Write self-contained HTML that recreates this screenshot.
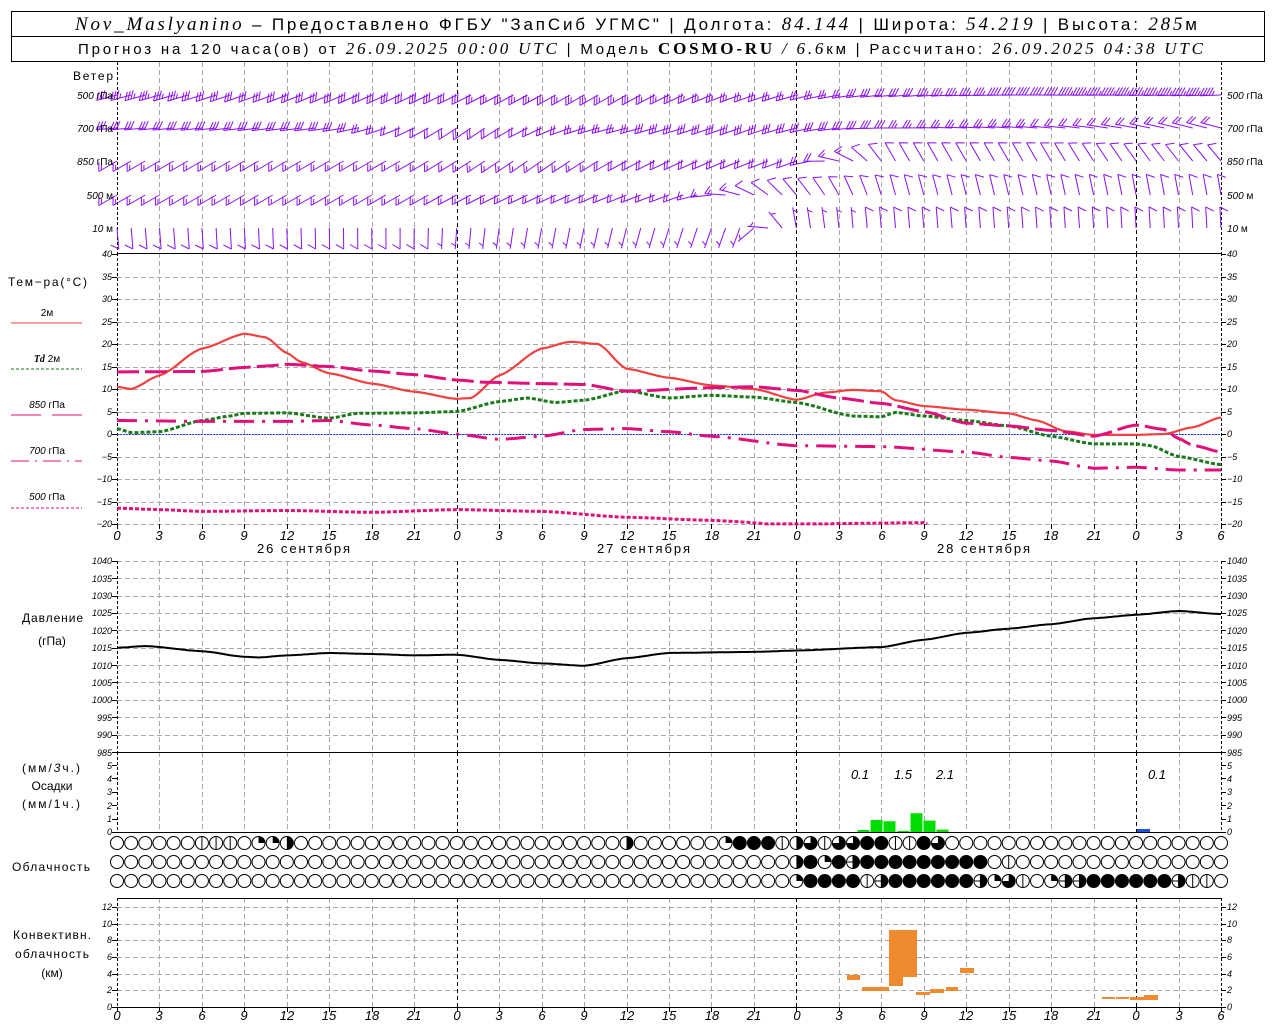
<!DOCTYPE html>
<html><head><meta charset="utf-8">
<style>
html,body{margin:0;padding:0;background:#fff;}
svg{display:block;}
text{font-family:"Liberation Sans",sans-serif;fill:#000;}
.ax{font-size:9px;font-style:italic;}
.tk{font-size:13px;font-style:italic;}
.ser{font-family:"Liberation Serif",serif;font-style:italic;}
</style></head>
<body>
<svg id="s" width="1280" height="1024" viewBox="0 0 1280 1024" xmlns="http://www.w3.org/2000/svg">
<rect x="0" y="0" width="1280" height="1024" fill="#fff"/>
<g id="grid"></g>
<g id="plot"></g>
<!-- header -->
<rect x="11.5" y="11.5" width="1253" height="50" fill="none" stroke="#000"/>
<line x1="11.5" y1="36.5" x2="1264.5" y2="36.5" stroke="#000"/>
<text x="75" y="30" font-size="17" textLength="1122" lengthAdjust="spacing"><tspan class="ser" font-size="19">Nov_Maslyanino</tspan> – Предоставлено ФГБУ "ЗапСиб УГМС" | Долгота: <tspan class="ser" font-size="19">84.144</tspan> | Широта: <tspan class="ser" font-size="19">54.219</tspan> | Высота: <tspan class="ser" font-size="19">285</tspan>м</text>
<text x="78" y="54" font-size="15" textLength="1125" lengthAdjust="spacing">Прогноз на 120 часа(ов) от <tspan class="ser" font-size="17">26.09.2025 00:00 UTC</tspan>  | Модель <tspan font-family="Liberation Serif" font-weight="bold" font-size="17">COSMO-RU</tspan> <tspan class="ser" font-size="17">/ 6.6</tspan>км | Рассчитано: <tspan class="ser" font-size="17">26.09.2025 04:38 UTC</tspan></text>
<!-- wind labels -->
<text x="113" y="80" text-anchor="end" font-size="12" textLength="40" lengthAdjust="spacing">Ветер</text>
<g font-size="10">
<text x="113" y="99" text-anchor="end"><tspan font-style="italic">500</tspan> гПа</text>
<text x="113" y="132" text-anchor="end"><tspan font-style="italic">700</tspan> гПа</text>
<text x="113" y="165" text-anchor="end"><tspan font-style="italic">850</tspan> гПа</text>
<text x="113" y="199" text-anchor="end"><tspan font-style="italic">500</tspan> м</text>
<text x="113" y="232" text-anchor="end"><tspan font-style="italic">10</tspan>   м</text>
<text x="1227" y="99"><tspan font-style="italic">500</tspan> гПа</text>
<text x="1227" y="132"><tspan font-style="italic">700</tspan> гПа</text>
<text x="1227" y="165"><tspan font-style="italic">850</tspan> гПа</text>
<text x="1227" y="199"><tspan font-style="italic">500</tspan> м</text>
<text x="1227" y="232"><tspan font-style="italic">10</tspan>   м</text>
</g>
<!-- temp legend -->
<text x="8" y="286" font-size="12" textLength="79" lengthAdjust="spacing">Тем−ра(°С)</text>
<text x="47" y="316" text-anchor="middle" font-size="10">2м</text>
<line x1="11" y1="323" x2="82" y2="323" stroke="#f04040"/>
<text x="47" y="362" text-anchor="middle" font-size="10"><tspan font-weight="bold" font-style="italic" font-family="Liberation Serif">Td</tspan>  2м</text>
<line x1="11" y1="369" x2="82" y2="369" stroke="#1a7a1a" stroke-dasharray="3,2"/>
<text x="47" y="408" text-anchor="middle" font-size="10"><tspan font-style="italic">850</tspan>  гПа</text>
<line x1="11" y1="415" x2="41" y2="415" stroke="#e0107a"/><line x1="52" y1="415" x2="82" y2="415" stroke="#e0107a"/>
<text x="47" y="454" text-anchor="middle" font-size="10"><tspan font-style="italic">700</tspan> гПа</text>
<line x1="11" y1="461" x2="82" y2="461" stroke="#e0107a" stroke-dasharray="18,6,2,6"/>
<text x="47" y="500" text-anchor="middle" font-size="10"><tspan font-style="italic">500</tspan> гПа</text>
<line x1="11" y1="508" x2="82" y2="508" stroke="#e0107a" stroke-dasharray="3,2"/>
<!-- dates -->
<text x="257" y="553" font-size="13" textLength="93" lengthAdjust="spacing">26 сентября</text>
<text x="597" y="553" font-size="13" textLength="93" lengthAdjust="spacing">27 сентября</text>
<text x="937" y="553" font-size="13" textLength="93" lengthAdjust="spacing">28 сентября</text>
<!-- left legends -->
<text x="22" y="622" font-size="12" textLength="61" lengthAdjust="spacing">Давление</text>
<text x="52" y="645" text-anchor="middle" font-size="12">(гПа)</text>
<text x="22" y="772" font-size="12" textLength="58" lengthAdjust="spacing">(мм/<tspan font-style="italic">3</tspan>ч.)</text>
<text x="52" y="790" text-anchor="middle" font-size="12">Осадки</text>
<text x="22" y="808" font-size="12" textLength="58" lengthAdjust="spacing">(мм/1ч.)</text>
<text x="12" y="871" font-size="12" textLength="78" lengthAdjust="spacing">Облачность</text>
<text x="13" y="939" font-size="12" textLength="78" lengthAdjust="spacing">Конвективн.</text>
<text x="15" y="958" font-size="12" textLength="74" lengthAdjust="spacing">облачность</text>
<text x="52" y="977" text-anchor="middle" font-size="12">(км)</text>
<g font-size="13" font-style="italic">
<text x="860" y="779" text-anchor="middle">0.1</text>
<text x="903" y="779" text-anchor="middle">1.5</text>
<text x="945" y="779" text-anchor="middle">2.1</text>
<text x="1157" y="779" text-anchor="middle">0.1</text>
</g>
<g class="ax">
<text x="112" y="257" text-anchor="end">40</text><text x="1227" y="257">40</text>
<text x="112" y="280" text-anchor="end">35</text><text x="1227" y="280">35</text>
<text x="112" y="302" text-anchor="end">30</text><text x="1227" y="302">30</text>
<text x="112" y="325" text-anchor="end">25</text><text x="1227" y="325">25</text>
<text x="112" y="347" text-anchor="end">20</text><text x="1227" y="347">20</text>
<text x="112" y="370" text-anchor="end">15</text><text x="1227" y="370">15</text>
<text x="112" y="392" text-anchor="end">10</text><text x="1227" y="392">10</text>
<text x="112" y="415" text-anchor="end">5</text><text x="1227" y="415">5</text>
<text x="112" y="437" text-anchor="end">0</text><text x="1227" y="437">0</text>
<text x="112" y="460" text-anchor="end">−5</text><text x="1227" y="460">−5</text>
<text x="112" y="482" text-anchor="end">−10</text><text x="1227" y="482">−10</text>
<text x="112" y="505" text-anchor="end">−15</text><text x="1227" y="505">−15</text>
<text x="112" y="527" text-anchor="end">−20</text><text x="1227" y="527">−20</text>
<text x="112" y="564" text-anchor="end">1040</text><text x="1227" y="564">1040</text>
<text x="112" y="582" text-anchor="end">1035</text><text x="1227" y="582">1035</text>
<text x="112" y="599" text-anchor="end">1030</text><text x="1227" y="599">1030</text>
<text x="112" y="616" text-anchor="end">1025</text><text x="1227" y="616">1025</text>
<text x="112" y="634" text-anchor="end">1020</text><text x="1227" y="634">1020</text>
<text x="112" y="651" text-anchor="end">1015</text><text x="1227" y="651">1015</text>
<text x="112" y="669" text-anchor="end">1010</text><text x="1227" y="669">1010</text>
<text x="112" y="686" text-anchor="end">1005</text><text x="1227" y="686">1005</text>
<text x="112" y="703" text-anchor="end">1000</text><text x="1227" y="703">1000</text>
<text x="112" y="721" text-anchor="end">995</text><text x="1227" y="721">995</text>
<text x="112" y="738" text-anchor="end">990</text><text x="1227" y="738">990</text>
<text x="112" y="756" text-anchor="end">985</text><text x="1227" y="756">985</text>
<text x="112" y="769" text-anchor="end">5</text><text x="1227" y="769">5</text>
<text x="112" y="782" text-anchor="end">4</text><text x="1227" y="782">4</text>
<text x="112" y="795" text-anchor="end">3</text><text x="1227" y="795">3</text>
<text x="112" y="809" text-anchor="end">2</text><text x="1227" y="809">2</text>
<text x="112" y="822" text-anchor="end">1</text><text x="1227" y="822">1</text>
<text x="112" y="835" text-anchor="end">0</text><text x="1227" y="835">0</text>
<text x="112" y="910" text-anchor="end">12</text><text x="1227" y="910">12</text>
<text x="112" y="927" text-anchor="end">10</text><text x="1227" y="927">10</text>
<text x="112" y="943" text-anchor="end">8</text><text x="1227" y="943">8</text>
<text x="112" y="960" text-anchor="end">6</text><text x="1227" y="960">6</text>
<text x="112" y="977" text-anchor="end">4</text><text x="1227" y="977">4</text>
<text x="112" y="993" text-anchor="end">2</text><text x="1227" y="993">2</text>
<text x="112" y="1010" text-anchor="end">0</text><text x="1227" y="1010">0</text>
</g>
<g class="tk" text-anchor="middle">
<text x="117" y="540">0</text><text x="159" y="540">3</text><text x="202" y="540">6</text><text x="244" y="540">9</text><text x="287" y="540">12</text><text x="329" y="540">15</text><text x="372" y="540">18</text><text x="414" y="540">21</text><text x="457" y="540">0</text><text x="499" y="540">3</text><text x="542" y="540">6</text><text x="584" y="540">9</text><text x="627" y="540">12</text><text x="669" y="540">15</text><text x="712" y="540">18</text><text x="754" y="540">21</text><text x="797" y="540">0</text><text x="839" y="540">3</text><text x="882" y="540">6</text><text x="924" y="540">9</text><text x="966" y="540">12</text><text x="1009" y="540">15</text><text x="1051" y="540">18</text><text x="1094" y="540">21</text><text x="1136" y="540">0</text><text x="1179" y="540">3</text><text x="1221" y="540">6</text>
<text x="117" y="1020">0</text><text x="159" y="1020">3</text><text x="202" y="1020">6</text><text x="244" y="1020">9</text><text x="287" y="1020">12</text><text x="329" y="1020">15</text><text x="372" y="1020">18</text><text x="414" y="1020">21</text><text x="457" y="1020">0</text><text x="499" y="1020">3</text><text x="542" y="1020">6</text><text x="584" y="1020">9</text><text x="627" y="1020">12</text><text x="669" y="1020">15</text><text x="712" y="1020">18</text><text x="754" y="1020">21</text><text x="797" y="1020">0</text><text x="839" y="1020">3</text><text x="882" y="1020">6</text><text x="924" y="1020">9</text><text x="966" y="1020">12</text><text x="1009" y="1020">15</text><text x="1051" y="1020">18</text><text x="1094" y="1020">21</text><text x="1136" y="1020">0</text><text x="1179" y="1020">3</text><text x="1221" y="1020">6</text>
</g>
</svg>
<script>
(function(){
var NS="http://www.w3.org/2000/svg";
var G=document.getElementById("grid"),P=document.getElementById("plot");
function el(par,t,a){var e=document.createElementNS(NS,t);for(var k in a)e.setAttribute(k,a[k]);par.appendChild(e);return e;}
function X(h){return 117+h*14.154;}
function line(par,x1,y1,x2,y2,st,w,da){var a={x1:x1,y1:y1,x2:x2,y2:y2,stroke:st,"stroke-width":w||1};if(da)a["stroke-dasharray"]=da;return el(par,"line",a);}
var GR="#a8a8a8";
function hg(y){line(G,117,y+.5,1221,y+.5,GR,1,"5,3");}
for(var t=35;t>=-20;t-=5){hg(Math.round(434-t*4.5));}
for(var p=1040;p>985;p-=5){hg(Math.round(561+(1040-p)*3.47));}
for(var k=2;k<=12;k+=2){hg(Math.round(1007-k*8.33));}
var secs=[[62,253],[253,524],[561,752],[752,832],[898,1007]];
for(var h=3;h<78;h+=3){var x=Math.round(X(h))+.5;var day=(h%24==0);
 secs.forEach(function(s){line(G,x,s[0],x,s[1],day?"#000":GR,1,day?"4,3":"5,3");});}
secs.forEach(function(s){line(G,117.5,s[0],117.5,s[1],"#000",1,"3,2");line(G,1221.5,s[0],1221.5,s[1],"#000",1,"3,2");});
function tk(y){line(G,112,y+.5,117,y+.5,"#000");line(G,1221,y+.5,1226,y+.5,"#000");}
for(var t=40;t>=-20;t-=5)tk(Math.round(434-t*4.5));
for(var p=1040;p>=985;p-=5)tk(Math.round(561+(1040-p)*3.47));
for(var i=0;i<=5;i++)tk(Math.round(832-i*13.4));
for(var k=0;k<=12;k+=2)tk(Math.round(1007-k*8.33));
for(var h=0;h<=78;h+=3){var x=Math.round(X(h))+.5;line(G,x,524,x,529,"#000");line(G,x,1007,x,1012,"#000");}
[253,752,832,898,1007].forEach(function(y){line(G,117,y+.5,1221,y+.5,"#000");});
line(G,117,434.5,1221,434.5,"#2040ff",1,"2,1");
function interp(pts,h){for(var i=0;i<pts.length-1;i++){if(h>=pts[i][0]&&h<=pts[i+1][0]){var a=pts[i],b=pts[i+1];var f=(h-a[0])/(b[0]-a[0]);f=(1-Math.cos(f*Math.PI))/2*0.5+f*0.5;return a[1]+(b[1]-a[1])*f;}}return pts[pts.length-1][1];}
function curve(pts,fy,st,w,da,clipY){var d="";for(var h=0;h<=78;h+=0.25){var y=fy(interp(pts,h));if(clipY&&y>clipY){continue;}d+=(d?"L":"M")+X(h).toFixed(1)+","+y.toFixed(1);}var a={d:d,fill:"none",stroke:st,"stroke-width":w};if(da)a["stroke-dasharray"]=da;el(P,"path",a);}
var TY=function(t){return 434-t*4.5;};
curve([[0,10.5],[1,10],[3,13],[6,19],[9,22.3],[10.5,21.5],[12,18],[13,16],[15,13.5],[18,11.2],[21,9.4],[24,7.8],[25,8],[27,13],[30,19],[32,20.5],[34,20],[36,14.5],[39,12.5],[42,10.8],[45,10],[48,7.6],[50,9.2],[52,9.8],[54,9.5],[55,7.5],[57,6.2],[60,5.4],[63,4.6],[65,3],[67,0.6],[69,-0.2],[72,-0.2],[74,0],[76,1.5],[78,3.7]],TY,"#f04040",2.2);
curve([[0,1.2],[1,0.3],[3,0.5],[6,3],[8,4],[9,4.6],[12,4.7],[15,3.5],[17,4.6],[21,4.7],[24,5],[27,7.2],[29,8],[31,7],[33,7.5],[36,9.6],[39,8],[42,8.6],[45,8.2],[48,7],[52,4],[54,3.8],[55,4.8],[57,4],[60,3],[63,1.8],[66,-0.5],[69,-2.2],[72,-2.2],[73,-2.6],[75,-5],[78,-6.8]],TY,"#1a7a1a",3,"4,2");
curve([[0,13.8],[6,13.9],[9,14.8],[11,15.2],[12,15.5],[15,15],[18,14],[21,13.2],[24,12],[26,11.5],[30,11.2],[33,11],[36,9.5],[42,10.3],[45,10.5],[48,9.7],[51,8],[54,6.8],[57,5],[60,2.4],[63,1.8],[66,0.8],[69,-0.5],[72,2],[74,1],[75,-1],[76,-2.5],[78,-4]],TY,"#e0107a",3,"22,6");
curve([[0,3],[6,2.8],[12,2.8],[15,3],[18,2],[21,1.2],[24,0],[27,-1.2],[30,-0.5],[33,1],[36,1.2],[39,0.5],[42,-0.5],[48,-2.6],[54,-2.8],[60,-4],[63,-5.2],[66,-6],[69,-7.6],[72,-7.4],[75,-8],[78,-8]],TY,"#e0107a",3,"20,8,3,8");
curve([[0,-16.5],[3,-16.8],[6,-17.2],[12,-17],[18,-17.4],[24,-16.8],[30,-17.2],[36,-18.5],[42,-19.2],[48,-20.3],[51,-19.9],[57,-19.7],[58,-21],[78,-24]],TY,"#e0107a",3,"4,2",524);
curve([[0,1015],[2,1015.5],[6,1014],[9,1012.4],[10,1012.2],[12,1012.8],[15,1013.5],[18,1013.2],[21,1012.8],[24,1013],[27,1011.5],[30,1010.5],[33,1009.8],[36,1012],[39,1013.5],[45,1013.8],[48,1014.2],[54,1015.2],[57,1017.3],[60,1019.3],[63,1020.5],[66,1021.8],[69,1023.5],[72,1024.5],[75,1025.6],[78,1024.7]],function(p){return 561+(1040-p)*3.47;},"#000",2);
[[857,0.15],[870,0.9],[883,0.8],[897,0.08],[910,1.4],[923,0.85],[936,0.18]].forEach(function(b){var hgt=b[1]*13.4;el(P,"rect",{x:b[0]+0.5,y:832-hgt,width:12,height:hgt,fill:"#00dd00"});});
el(P,"rect",{x:1137,y:829,width:13,height:3,fill:"#2050e0"});
[[847,975,13,5],[862,987,13,4],[875,987,14,4],[889,930,14,56],[903,930,14,47],[916,992,14,3],[930,989,14,4],[946,987,12,4],[960,968,14,5],[1102,997,13,2],[1116,997,13,2],[1130,997,14,3],[1144,995,14,5]].forEach(function(r){el(P,"rect",{x:r[0],y:r[1],width:r[2],height:r[3],fill:"#f08a30"});});
function row(spec){var a=[];for(var i=0;i<79;i++)a.push("o");spec.forEach(function(s){for(var i=s[0];i<=s[1];i++)a[i]=s[2];});return a;}
var R1=row([[6,8,"v"],[10,11,"q"],[12,12,"h2"],[36,36,"h2"],[43,43,"q"],[44,46,"f"],[47,47,"v"],[48,48,"h2"],[49,49,"t"],[50,50,"v"],[51,52,"t"],[53,54,"f"],[55,56,"v"],[57,57,"f"],[58,58,"t"]]);
var R2=row([[48,48,"h2"],[49,49,"f"],[50,50,"q"],[51,51,"f"],[52,52,"x"],[53,61,"f"],[63,63,"v"]]);
var R3=row([[48,48,"q"],[49,52,"f"],[53,53,"v"],[54,54,"x"],[55,60,"f"],[61,61,"x"],[62,62,"q"],[63,63,"t"],[64,64,"v"],[66,66,"q"],[67,67,"x"],[68,68,"x"],[69,74,"f"],[75,75,"x"],[76,77,"v"]]);
function circ(cx,cy,t){var r=6.5;
 if(t=="f"){el(P,"circle",{cx:cx,cy:cy,r:r,fill:"#000",stroke:"#000"});return;}
 el(P,"circle",{cx:cx,cy:cy,r:r,fill:"#fff",stroke:"#000"});
 if(t=="v")line(P,cx,cy-r,cx,cy+r,"#000");
 if(t=="q")el(P,"path",{d:"M"+cx+","+cy+"V"+(cy-r)+"A"+r+","+r+" 0 0 1 "+(cx+r)+","+cy+"Z",fill:"#000"});
 if(t=="h2")el(P,"path",{d:"M"+cx+","+(cy-r)+"A"+r+","+r+" 0 0 1 "+cx+","+(cy+r)+"Z",fill:"#000"});
 if(t=="t")el(P,"path",{d:"M"+cx+","+cy+"V"+(cy-r)+"A"+r+","+r+" 0 1 1 "+(cx-r)+","+cy+"Z",fill:"#000"});
 if(t=="x"){line(P,cx,cy-r,cx,cy+r,"#000");el(P,"path",{d:"M"+cx+","+(cy-r)+"A"+r+","+r+" 0 0 1 "+cx+","+(cy+r)+"Z",fill:"#000"});line(P,cx-r,cy,cx,cy,"#000");}
}
for(var i=0;i<79;i++){var cx=X(i);circ(cx,843,R1[i]);circ(cx,862,R2[i]);circ(cx,881,R3[i]);}
var WC="#8a10f0";
function barb(x,y,dir,spd){var a=dir*Math.PI/180;var ux=Math.sin(a),uy=-Math.cos(a);var L=21;
 var tx=x+ux*L,ty=y+uy*L;var d="M"+x.toFixed(1)+","+y.toFixed(1)+"L"+tx.toFixed(1)+","+ty.toFixed(1);
 var th=2.1;var fx=ux*Math.cos(th)-uy*Math.sin(th),fy=ux*Math.sin(th)+uy*Math.cos(th);
 var n=Math.round(spd/5),pos=0;
 while(n>=2){var px=tx-ux*pos,py=ty-uy*pos;d+="M"+px.toFixed(1)+","+py.toFixed(1)+"l"+(fx*9).toFixed(1)+","+(fy*9).toFixed(1);pos+=3;n-=2;}
 if(n==1){if(pos==0)pos=3;var px=tx-ux*pos,py=ty-uy*pos;d+="M"+px.toFixed(1)+","+py.toFixed(1)+"l"+(fx*5).toFixed(1)+","+(fy*5).toFixed(1);}
 el(P,"path",{d:d,fill:"none",stroke:WC,"stroke-width":1});}
var rows=[
 [95,[[0,255],[20,245],[35,240],[45,250],[55,265],[65,270],[78,268]],[[0,35],[10,30],[20,30],[30,25],[40,25],[50,25],[60,35],[70,45],[78,45]]],
 [128,[[0,265],[15,262],[25,235],[35,255],[45,250],[55,270],[65,275],[78,285]],[[0,30],[15,30],[22,20],[30,20],[40,30],[50,30],[60,25],[70,20],[78,20]]],
 [161,[[0,240],[20,240],[30,235],[40,245],[48,250],[55,330],[65,330],[78,320]],[[0,15],[20,15],[30,15],[40,20],[48,20],[55,10],[78,10]]],
 [195,[[0,240],[20,240],[30,245],[40,250],[48,320],[55,345],[78,350]],[[0,15],[20,15],[30,15],[40,15],[48,10],[55,10],[78,10]]],
 [228,[[0,175],[20,180],[30,190],[44,200],[48,350],[52,355],[78,357]],[[0,8],[20,8],[30,6],[45,5],[48,6],[55,8],[78,8]]]
];
rows.forEach(function(r){for(var h=0;h<=78;h++){barb(X(h),r[0],interp(r[1],h),interp(r[2],h));}});
})();
</script>
</body></html>
